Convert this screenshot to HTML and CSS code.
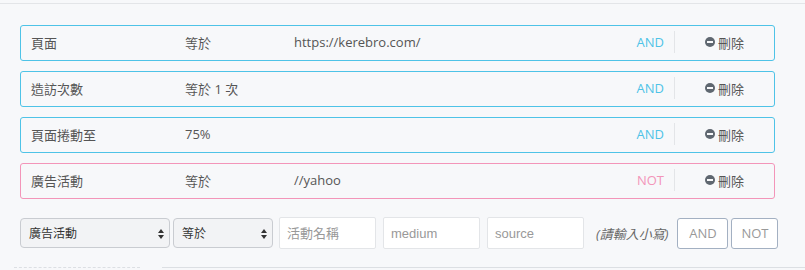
FILE: index.html
```html
<!DOCTYPE html>
<html lang="zh-Hant">
<head>
    <meta charset="UTF-8">
    <title>Filters</title>
    <link rel="stylesheet" href="styles.css">
</head>
<body>
    <div class="top-line"></div>

    <div class="rules">
        <div class="rule">
            <span class="col-name">頁面</span>
            <span class="col-op">等於</span>
            <span class="col-val">https://kerebro.com/</span>
            <span class="logic">AND</span>
            <span class="del"><i class="minus"></i>刪除</span>
        </div>
        <div class="rule">
            <span class="col-name">造訪次數</span>
            <span class="col-op">等於 1 次</span>
            <span class="col-val"></span>
            <span class="logic">AND</span>
            <span class="del"><i class="minus"></i>刪除</span>
        </div>
        <div class="rule">
            <span class="col-name">頁面捲動至</span>
            <span class="col-op">75%</span>
            <span class="col-val"></span>
            <span class="logic">AND</span>
            <span class="del"><i class="minus"></i>刪除</span>
        </div>
        <div class="rule not">
            <span class="col-name">廣告活動</span>
            <span class="col-op">等於</span>
            <span class="col-val">//yahoo</span>
            <span class="logic">NOT</span>
            <span class="del"><i class="minus"></i>刪除</span>
        </div>
    </div>

    <div class="add-form">
        <div class="select sel-field">廣告活動<i class="arrows"></i></div>
        <div class="select sel-op">等於<i class="arrows"></i></div>
        <input class="field" type="text" placeholder="活動名稱">
        <input class="field" type="text" placeholder="medium">
        <input class="field" type="text" placeholder="source">
        <span class="hint">(請輸入小寫)</span>
        <button class="btn btn-and">AND</button>
        <button class="btn btn-not">NOT</button>
    </div>

    <div class="bottom-line">
        <div class="dashed"></div>
        <div class="solid"></div>
    </div>
</body>
</html>
```

FILE: styles.css
```css
body {
    margin: 0;
    background: #f7f8fa;
    font-family: "Open Sans", "Noto Sans CJK TC", sans-serif;
    font-size: 13px;
    color: #555;
    width: 805px;
    height: 270px;
    overflow: hidden;
}
.top-line {
    height: 3px;
    border-bottom: 1px solid #e3e5e8;
}
.rules {
    padding: 21px 30px 0 20px;
    display: flex;
    flex-direction: column;
    gap: 10px;
}
.rule {
    display: flex;
    align-items: center;
    height: 32px;
    padding: 0 0 2px 10px;
    border: 1px solid #4ec3e7;
    border-radius: 3px;
}
.rule.not {
    border-color: #f395b9;
}
.col-name {
    width: 154px;
}
.col-op {
    width: 109px;
}
.col-val {
    flex: 1;
}
.logic {
    color: #4ec3e7;
    padding-right: 10px;
    height: 22px;
    line-height: 22px;
    border-right: 1px solid #e3e5e8;
}
.rule.not .logic {
    color: #f395b9;
}
.del {
    width: 99px;
    display: flex;
    align-items: center;
    justify-content: center;
}
.minus {
    display: inline-block;
    width: 10px;
    height: 10px;
    border-radius: 50%;
    background: #5f6770;
    margin-right: 3px;
    position: relative;
}
.minus::after {
    content: "";
    position: absolute;
    left: 2px;
    top: 4px;
    width: 6px;
    height: 2px;
    background: #f7f8fa;
}
.add-form {
    display: flex;
    align-items: center;
    padding: 18px 0 0 20px;
}
.select {
    height: 30px;
    line-height: 30px;
    box-sizing: border-box;
    border: 1px solid #c9ccd1;
    border-radius: 4px;
    background: #f2f3f5;
    padding-left: 8px;
    color: #333;
    font-size: 12px;
    position: relative;
}
.sel-field {
    width: 150px;
    margin-right: 3px;
}
.sel-op {
    width: 100px;
    margin-right: 6px;
}
.arrows {
    position: absolute;
    right: 5px;
    top: 10px;
    width: 0;
    height: 0;
    border-left: 3px solid transparent;
    border-right: 3px solid transparent;
    border-bottom: 4px solid #333;
}
.arrows::after {
    content: "";
    position: absolute;
    left: -3px;
    top: 6px;
    border-left: 3px solid transparent;
    border-right: 3px solid transparent;
    border-top: 4px solid #333;
}
.field {
    width: 97px;
    height: 32px;
    box-sizing: border-box;
    border: 1px solid #e3e5e8;
    border-radius: 2px;
    background: #fff;
    padding: 0 7px;
    margin-right: 7px;
    font-family: "Liberation Sans", "Noto Sans CJK TC", sans-serif;
    font-size: 13px;
    outline: none;
}
.field::placeholder {
    color: #999;
}
.hint {
    font-style: italic;
    font-size: 13px;
    color: #666;
    margin-left: 5px;
    margin-right: 9px;
}
.btn {
    height: 31px;
    box-sizing: border-box;
    background: #fff;
    border: 1px solid #a3b0c2;
    border-radius: 3px;
    color: #999;
    font-family: "Open Sans", sans-serif;
    font-size: 13px;
    padding: 0;
}
.btn-and {
    width: 51px;
    margin-right: 3px;
}
.btn-not {
    width: 47px;
}
.bottom-line {
    display: flex;
    margin-top: 18px;
}
.dashed {
    margin-left: 14px;
    width: 126px;
    border-top: 1px dashed #dcdfe3;
}
.solid {
    margin-left: 22px;
    flex: 1;
    border-top: 1px solid #dcdfe3;
}
```
